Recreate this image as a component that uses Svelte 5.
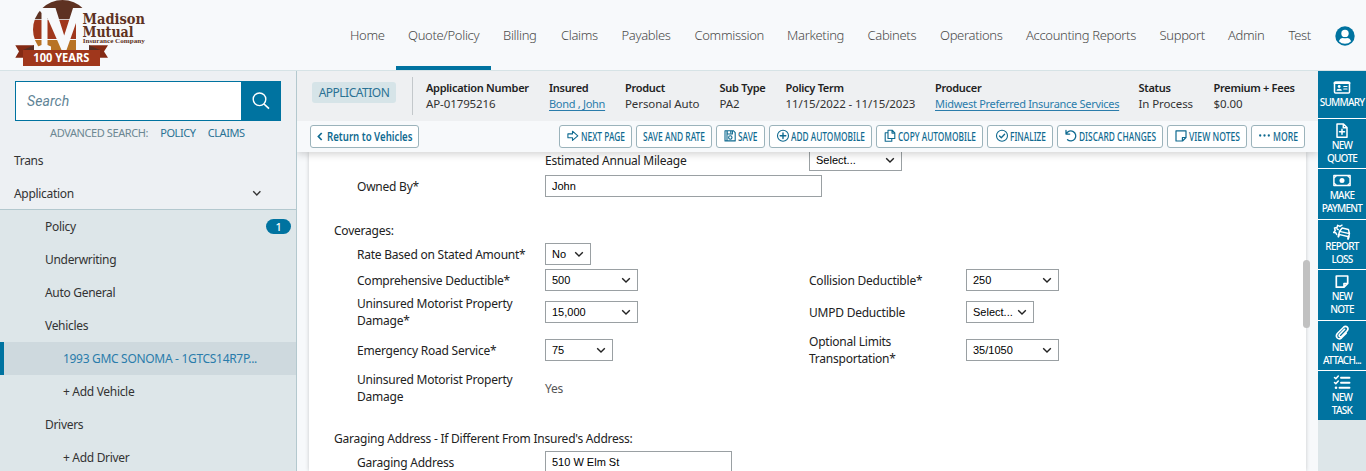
<script>
  const nav = [
    ['Home', 58], ['Quote/Policy', 95], ['Billing', 58], ['Claims', 60.5], ['Payables', 73],
    ['Commission', 92.5], ['Marketing', 80.5], ['Cabinets', 72.5], ['Operations', 86],
    ['Accounting Reports', 133.5], ['Support', 68.5], ['Admin', 60.5], ['Test', 46],
  ];
  const facts = [
    ['Application Number', 'AP-01795216', 123],
    ['Insured', 'Bond , John', 76, true],
    ['Product', 'Personal Auto', 94.5],
    ['Sub Type', 'PA2', 66],
    ['Policy Term', '11/15/2022 - 11/15/2023', 149.5],
    ['Producer', 'Midwest Preferred Insurance Services', 203.5, true],
    ['Status', 'In Process', 75],
    ['Premium + Fees', '$0.00', 90],
  ];
  const actions = [
    ['next', 'NEXT PAGE', 73, 44], ['', 'SAVE AND RATE', 76, 62], ['save', 'SAVE', 49, 19.5],
    ['add', 'ADD AUTOMOBILE', 103, 74], ['copy', 'COPY AUTOMOBILE', 107, 78],
    ['check', 'FINALIZE', 66, 36], ['undo', 'DISCARD CHANGES', 106, 77],
    ['note', 'VIEW NOTES', 80, 51], ['dots', 'MORE', 54, 25],
  ];
  const tree = [
    ['Policy', 0], ['Underwriting', 0], ['Auto General', 0], ['Vehicles', 0],
    ['1993 GMC SONOMA - 1GTCS14R7P...', 1], ['+ Add Vehicle', 1], ['Drivers', 0], ['+ Add Driver', 1],
  ];
  const quick = [
    ['card', ['SUMMARY'], 48], ['file', ['NEW', 'QUOTE'], 50], ['cash', ['MAKE', 'PAYMENT'], 51],
    ['crash', ['REPORT', 'LOSS'], 50], ['bignote', ['NEW', 'NOTE'], 51],
    ['clip', ['NEW', 'ATTACH...'], 50], ['tasks', ['NEW', 'TASK'], 49],
  ];
</script>

{#snippet icon(name)}
  <svg class="ico" width="14" height="14" viewBox="0 0 14 14" fill="none" stroke="currentColor" stroke-width="1.1" stroke-linejoin="round" stroke-linecap="round">
    {#if name === 'next'}
      <path d="M1.900 4.900h4.600V2.200l5.300 4.600-5.300 4.600V8.700H1.900z" />
    {:else if name === 'save'}
      <path d="M2 1.700h8.300l1.900 1.900v8.300H2zM4.200 1.900v3.100h5.200V1.900M4 1.900v9.800" /><circle cx="7.300" cy="8.500" r="1.700" /><path d="M7.800 2.300v1.900" />
    {:else if name === 'add'}
      <circle cx="7" cy="6.800" r="5.500" /><path d="M7 4v5.600M4.200 6.800h5.600" stroke-width="1.400" />
    {:else if name === 'copy'}
      <path d="M5 1.200h4.200l2.600 2.600v5.700H5zM9 1.400v2.700h2.700M4.900 3.700H2.200v8.600h6.600V9.700" />
    {:else if name === 'check'}
      <circle cx="7" cy="6.800" r="5.500" /><path d="M4.500 7l1.800 1.800 3.300-3.600" stroke-width="1.300" />
    {:else if name === 'undo'}
      <path d="M2 1.500v3.600h3.700M2.200 4.900a5 5 0 1 1 1.300 5.800" stroke-width="1.300" />
    {:else if name === 'note'}
      <path d="M2 1.800h10v6.700l-3.500 3.500H2zM8.400 11.800V8.500h3.400" stroke-width="1.200" />
    {:else if name === 'dots'}
      <g fill="currentColor" stroke="none"><circle cx="2.200" cy="6.500" r="1.150" /><circle cx="6.500" cy="6.500" r="1.150" /><circle cx="10.800" cy="6.500" r="1.150" /></g>
    {/if}
  </svg>
{/snippet}

{#snippet quickIcon(name)}
  <svg width="20" height="17" viewBox="0 0 20 17" fill="none" stroke="#fff" stroke-width="1.500" stroke-linejoin="round" stroke-linecap="round">
    {#if name === 'card'}
      <rect x="2.500" y="3" width="15" height="11" rx="1" /><path d="M2.500 4h15" stroke-width="2" /><circle cx="7.200" cy="7.500" r="1.400" fill="#fff" stroke="none" /><path d="M4.500 11.800q0-2 2.700-2t2.700 2z" fill="#fff" stroke="none" /><path d="M11.800 7.500h3.200M11.800 10h3.200" stroke-width="1.200" />
    {:else if name === 'file'}
      <path d="M5 2h6.500L15 5.500V15.200H5zM11.300 2.200v3.500h3.500M10 7.200v5M7.500 9.700h5" />
    {:else if name === 'cash'}
      <rect x="1.900" y="3.400" width="16.200" height="10.200" /><circle cx="10" cy="8.500" r="2.500" fill="#fff" stroke="none" /><path d="M2.500 5.600l2-2M17.500 5.600l-2-2M2.500 11.400l2 2M17.500 11.400l-2 2" stroke-width="1.300" />
    {:else if name === 'crash'}
      <g transform="rotate(13 12 10)"><path d="M7.300 13.700V9.300l1.800-3.800h6.400l1.900 3.800v4.400M7.300 9.400h10.100M7.300 12.500h10.100" /><path d="M7.400 12.500v2.300M17.300 12.500v2.300" stroke-width="2" /></g>
      <path d="M4.700 11.500l-.9-1.700-2.100-.3 1.500-2L2.500 5l2.500-.5.7-2.200 2.200 1.100L10 2.200M5.200 6l1 .6" stroke-width="1.500" />
    {:else if name === 'bignote'}
      <path d="M4.300 3h11.400v7.500l-3.700 3.700H4.300zM12 14v-3.500h3.500" stroke-width="1.700" />
    {:else if name === 'clip'}
      <path d="M12.600 5.300L7.500 10.500q-.9 1.400.2 2.100 1 .6 2-.4L15.300 6.600q1.500-2-.1-3.600-1.800-1.400-3.600.2L5.300 9.500q-1.900 2.500 0 4.500 2.100 1.700 4.300-.2l4.600-4.700" stroke-width="1.600" />
    {:else if name === 'tasks'}
      <path d="M9 3.700h8.500M9 8.700h8.500M7.500 13.700h10" stroke-width="1.900" /><path d="M2.500 3.500l1.300 1.300 2.500-2.800M2.500 8.500l1.300 1.300 2.500-2.800" stroke-width="1.500" /><circle cx="4" cy="13.700" r="1.300" fill="#fff" stroke="none" />
    {/if}
  </svg>
{/snippet}

{#snippet select(value, width)}
  <div class="control select" style:width="{width}px">
    <span>{value}</span>
    <svg width="10" height="7" viewBox="0 0 10 7" fill="none" stroke="#222" stroke-width="1.400"><path d="M1.200 1.200L5 5l3.800-3.800" /></svg>
  </div>
{/snippet}

<div class="app">
  <header>
    <svg class="logo" width="140" height="70" viewBox="0 0 140 70">
      <clipPath id="disc"><circle cx="52.500" cy="29.500" r="29.500" /></clipPath>
      <g clip-path="url(#disc)">
        <path fill="#5e3222" d="M20 0h56v19.200H20z" />
        <path fill="#a0371c" d="M20 20h56v19H20z" />
        <path fill="#b87325" d="M20 40h56v20H20z" />
      </g>
      <path fill="#f7f9fb" d="M30 8h15.500L54.200 35.500 63 8h22v42H66V23L56.500 50h-5L37.500 18v27l3.500 1.500V50H28v-3.500l3.500-1.500V13L30 11z" />
      <path fill="#842a14" d="M5.300 45.300H24v12.500H5.300L9 51.500zM98 45.300H79v12.500h19l-4-6.300z" />
      <path fill="#562d22" d="M13 50l11-4.700V50zM90 50l-11-4.700V50z" />
      <path fill="#a0371c" d="M13 50h77v16H13z" />
      <text x="23.300" y="62.200" textLength="56" lengthAdjust="spacingAndGlyphs" class="years">100 YEARS</text>
      <text x="72.500" y="23.800" textLength="62.500" lengthAdjust="spacingAndGlyphs" class="brand">Madison</text>
      <text x="72.500" y="36.700" textLength="51" lengthAdjust="spacingAndGlyphs" class="brand">Mutual</text>
      <text x="72.800" y="43.200" textLength="62" lengthAdjust="spacingAndGlyphs" class="company">Insurance Company</text>
    </svg>
    <nav>
      {#each nav as [label, width]}
        <a class:current={label === 'Quote/Policy'} style:width="{width}px">{label}</a>
      {/each}
    </nav>
    <svg class="user" width="20" height="20" viewBox="0 0 20 20"><circle cx="10" cy="10" r="9.700" fill="#0073a0" /><circle cx="10" cy="7.400" r="3.700" fill="#fff" /><path fill="#fff" d="M3.900 15.300q1.100-3.400 4-3.400 2.100.7 4.200 0 2.900 0 4 3.400Q13.700 17.800 10 17.800t-6.100-2.500z" /></svg>
  </header>

  <div class="body">
    <aside>
      <div class="search">
        <span>Search</span>
        <div class="go"><svg width="18" height="18" viewBox="0 0 18 18" fill="none" stroke="#fff" stroke-width="1.400"><circle cx="7.500" cy="7.300" r="6.300" /><path d="M12 12l5 4.700" stroke-width="1.700" /></svg></div>
      </div>
      <div class="advanced"><span>ADVANCED SEARCH:</span><a>POLICY</a><a>CLAIMS</a></div>
      <div class="top-row">Trans</div>
      <div class="top-row">Application
        <svg width="10" height="7" viewBox="0 0 10 7" fill="none" stroke="#333" stroke-width="1.400"><path d="M1.200 1.300L4.800 4.900l3.600-3.600" /></svg>
      </div>
      <div class="tree">
        {#each tree as [label, depth], i}
          <div class="leaf" class:deep={depth === 1} class:active={i === 4}>
            <span>{label}</span>
            {#if i === 0}<b>1</b>{/if}
          </div>
        {/each}
      </div>
    </aside>

    <main>
      <section class="summary">
        <span class="tag">APPLICATION</span>
        <div class="facts">
          {#each facts as [label, value, width, link]}
            <div style:width="{width}px"><strong>{label}</strong><span class:link>{value}</span></div>
          {/each}
        </div>
      </section>
      <section class="toolbar">
        <button class="back">
          <svg width="6" height="9" viewBox="0 0 6 9" fill="none" stroke="currentColor" stroke-width="1.700"><path d="M4.700 1L1.400 4.500 4.700 8" /></svg>
          <svg class="label" width="86" height="20"><text x="0" y="14" textLength="85.500" lengthAdjust="spacingAndGlyphs">Return to Vehicles</text></svg>
        </button>
        <div class="actions">
          {#each actions as [name, label, width, textWidth]}
            <button style:width="{width}px">
              {#if name}{@render icon(name)}{/if}
              <svg class="label" width={textWidth} height="20"><text x="0" y="14" textLength={textWidth} lengthAdjust="spacingAndGlyphs">{label}</text></svg>
            </button>
          {/each}
        </div>
      </section>
      <section class="stage">
        <div class="sheet">
          <div class="row mileage"><span></span><label>Estimated Annual Mileage</label>{@render select('Select...', 93)}</div>
          <div class="row"><label>Owned By*</label><div class="control" style:width="277px">John</div></div>
          <h2>Coverages:</h2>
          <div class="row"><label>Rate Based on Stated Amount*</label>{@render select('No', 46)}</div>
          <div class="row"><label>Comprehensive Deductible*</label>{@render select('500', 93)}<label>Collision Deductible*</label>{@render select('250', 93)}</div>
          <div class="row tall"><label>Uninsured Motorist Property<br />Damage*</label>{@render select('15,000', 93)}<label>UMPD Deductible</label>{@render select('Select...', 68)}</div>
          <div class="row tall"><label>Emergency Road Service*</label>{@render select('75', 68)}<label>Optional Limits<br />Transportation*</label>{@render select('35/1050', 93)}</div>
          <div class="row tall"><label>Uninsured Motorist Property<br />Damage</label><span class="plain">Yes</span></div>
          <h2>Garaging Address - If Different From Insured's Address:</h2>
          <div class="row"><label>Garaging Address</label><div class="control" style:width="187px">510 W Elm St</div></div>
        </div>
        <div class="thumb"></div>
      </section>
    </main>

    <div class="quick">
      {#each quick as [name, lines, height]}
        <div class="tile" style:height="{height}px">
          {@render quickIcon(name)}
          {#each lines as line}<span>{line}</span>{/each}
        </div>
      {/each}
    </div>
  </div>
</div>

<style>
  :global(body) { background: #f7f9fb; }
  .app { height: 471px; overflow: hidden; display: flex; flex-direction: column; font: 12px/17px "Noto Sans", sans-serif; color: #333; }
  .app * { box-sizing: border-box; }
  svg { display: block; flex: none; }
  header { height: 71px; flex: none; display: flex; background: #f7f9fb; border-bottom: 1px solid #d6e3e6; }
  .logo { margin-left: 10px; }
  .years { font: bold 11.500px "Noto Sans", sans-serif; fill: #fff; }
  .brand { font: bold 14px "DejaVu Serif", serif; fill: #5e3222; }
  .company { font: bold 6px "Liberation Serif", serif; fill: #5e3222; }
  nav { display: flex; margin-left: 188px; height: 70px; }
  nav a { padding: 25px 0 0 12px; font-size: 13px; line-height: 20px; font-weight: 300; letter-spacing: -.33px; color: #4a4a4a; white-space: nowrap; border-bottom: 4px solid transparent; }
  nav a.current { border-color: #0073a0; }
  .user { margin: 26px 0 0 12.500px; }
  .body { flex: 1; min-height: 0; display: flex; }
  aside { width: 297px; flex: none; background: #edf0f3; border-right: 1px solid #b3c8ce; letter-spacing: -.31px; }
  .search { margin: 10px 0 0 15px; width: 266px; height: 40px; border: 1px solid #0073a0; background: #fff; display: flex; align-items: center; justify-content: space-between; padding-left: 11px; font: italic 14px Roboto, sans-serif; letter-spacing: 0.1px; color: #5f8496; }
  .go { width: 40px; height: 40px; margin-right: -1px; background: #0073a0; display: grid; place-items: center; }
  .advanced { height: 23px; padding: 3px 0 0 50px; display: flex; gap: 12px; font-size: 11px; letter-spacing: -.4px; color: #6c8792; }
  .advanced a { color: #2a7294; }
  .top-row { height: 33px; padding: 0 34px 0 14px; display: flex; align-items: center; justify-content: space-between; }
  .tree { height: 263px; margin-top: -1px; border-top: 1px solid #b3c8ce; background: #dde6e9; }
  .leaf { height: 33px; padding: 0 5px 0 45px; display: flex; align-items: center; justify-content: space-between; }
  .leaf.deep { padding-left: 63px; }
  .leaf.active { background: #ced9de; border-left: 4px solid #0073a0; padding-left: 59px; color: #2a7cab; }
  .leaf b { width: 25px; height: 15px; border-radius: 8px; background: #0073a0; color: #fff; font-size: 11px; line-height: 15px; font-weight: 500; text-align: center; }
  main { width: 1021px; flex: none; display: flex; flex-direction: column; background: #f7f9fb; }
  .summary { height: 50px; flex: none; display: flex; background: #eef0f2; }
  .tag { width: 84px; height: 21px; margin: 11px 16px 0 15px; border-radius: 3px; background: #d6e4e8; color: #2a7294; text-align: center; line-height: 21px; letter-spacing: -.5px; }
  .facts { display: flex; height: 38px; margin-top: 6px; padding-left: 13px; border-left: 1px solid #c3c8cb; }
  .facts div { display: flex; flex-direction: column; white-space: nowrap; font-size: 11.500px; padding-top: 3px; line-height: 16px; letter-spacing: -.1px; }
  .facts strong { font-weight: 600; color: #222; font-size: 11px; letter-spacing: -.29px; }
  .facts .link { color: #2a7cab; text-decoration: underline; font-size: 11px; letter-spacing: -.29px; text-underline-offset: 2px; }
  .toolbar { height: 31px; flex: none; display: flex; align-items: center; justify-content: space-between; padding: 0 13px; background: #f7f9fb; position: relative; z-index: 1; box-shadow: 0 2px 8px #00000030; clip-path: inset(0 0 -12px 0); }
  button { height: 23px; padding: 0; border: 1px solid #9bb3bb; border-radius: 3px; background: #fff; color: #0f6a90; display: flex; align-items: center; justify-content: center; gap: 1px; }
  .label { overflow: visible; }
  .ico { margin-top: -1px; }
  button text { font: 500 12px "Noto Sans", sans-serif; fill: currentColor; }
  .back { width: 109px; gap: 4px; }
  .back text { font-weight: 600; }
  .actions { display: flex; gap: 4px; }
  .stage { flex: 1; min-height: 0; display: flex; position: relative; }
  .sheet { width: 997px; margin-left: 12px; height: 319px; overflow: hidden; background: #fff; box-shadow: 0 0 4px #0003; letter-spacing: -.23px; }
  .thumb { position: absolute; left: 1006px; top: 108px; width: 7px; height: 68px; border-radius: 3.500px; background: #c1c1c1; }
  .row { height: 26px; padding-left: 48px; display: grid; grid-template-columns: 188px 264px 157px 1fr; align-items: center; color: #222; }
  .row:first-child { margin-top: -5px; }
  .row.tall { height: 38px; }
  .row label { white-space: nowrap; }
  .plain { color: #555; }
  h2 { margin: 22px 0 0 25px; font: inherit; line-height: 20px; height: 20px; color: #222; }
  .control { height: 22px; border: 1px solid #9aa0a3; background: #fff; padding: 0 6px; font: 11px/20px "Liberation Sans", sans-serif; letter-spacing: 0; color: #000; display: flex; align-items: center; white-space: nowrap; }
  .select { justify-content: space-between; }
  .quick { width: 48px; background: #dde6e9; }
  .tile { background: #0073a0; border-bottom: 1px solid #fff; color: #fff; font-size: 10px; font-weight: 500; letter-spacing: -.75px; line-height: 13px; display: flex; flex-direction: column; align-items: center; padding-top: 3px; }
  .tile:first-child { padding-top: 8px; }
  .tile:last-child { border: 0; }
</style>
